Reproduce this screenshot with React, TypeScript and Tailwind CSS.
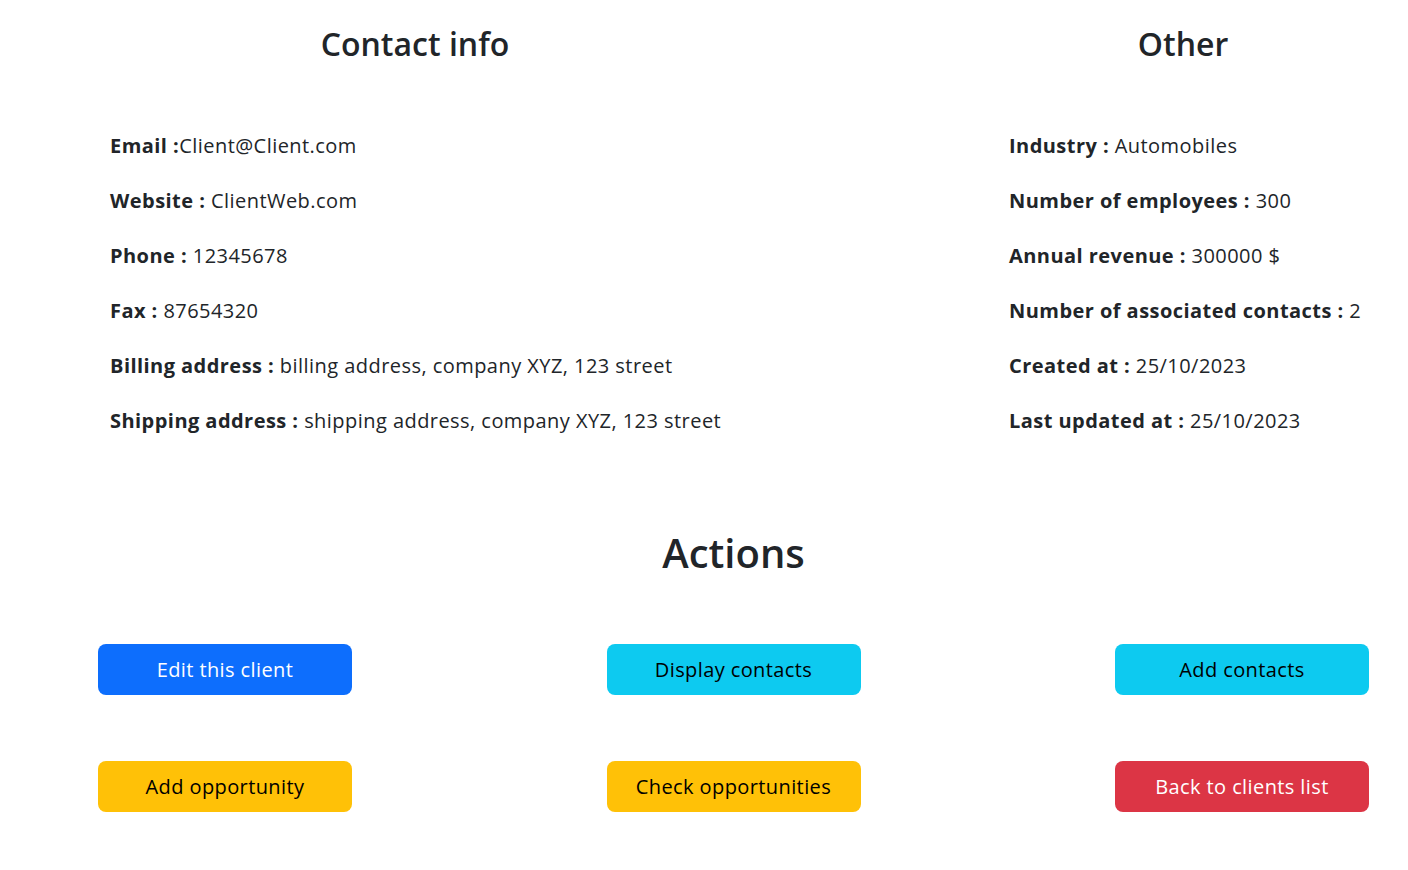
import React from "react";

const contact: [string, string][] = [
  ["Email :", "Client@Client.com"],
  ["Website : ", "ClientWeb.com"],
  ["Phone : ", "12345678"],
  ["Fax : ", "87654320"],
  ["Billing address : ", "billing address, company XYZ, 123 street"],
  ["Shipping address : ", "shipping address, company XYZ, 123 street"],
];

const other: [string, string][] = [
  ["Industry : ", "Automobiles"],
  ["Number of employees : ", "300"],
  ["Annual revenue : ", "300000 $"],
  ["Number of associated contacts : ", "2"],
  ["Created at : ", "25/10/2023"],
  ["Last updated at : ", "25/10/2023"],
];

function InfoList({ items }: { items: [string, string][] }) {
  return (
    <div className="mt-[55px] flex flex-col">
      {items.map(([k, v]) => (
        <div
          key={k}
          className="h-[55px] pt-[1px] flex items-center text-[20px] tracking-[0.45px] whitespace-pre"
        >
          <span className="font-bold">{k}</span>
          <span>{v}</span>
        </div>
      ))}
    </div>
  );
}

function Btn({ label, cls }: { label: string; cls: string }) {
  return (
    <button className={`w-[254px] h-[51px] rounded-[8px] text-[20px] tracking-[0.4px] ${cls}`}>
      {label}
    </button>
  );
}

export default function App() {
  return (
    <div
      className="min-h-[870px] bg-white text-[#212529]"
      style={{ fontFamily: '"Open Sans", "Noto Sans", sans-serif' }}
    >
      <div className="flex pt-[25px]">
        <div className="ml-[110px] w-[610px]">
          <h2 className="text-center text-[32px] leading-[38px] font-semibold">Contact info</h2>
          <InfoList items={contact} />
        </div>
        <div className="ml-[289px] w-[348px]">
          <h2 className="text-center text-[32px] leading-[38px] font-semibold">Other</h2>
          <InfoList items={other} />
        </div>
      </div>
      <div className="mx-[98px] w-[1271px]">
        <h1 className="mt-[81px] text-center text-[40px] leading-[48px] font-semibold">Actions</h1>
        <div className="mt-[67px] flex flex-col gap-[66px]">
          <div className="flex justify-between">
            <Btn label="Edit this client" cls="bg-[#0d6efd] text-white" />
            <Btn label="Display contacts" cls="bg-[#0dcaf0] text-black" />
            <Btn label="Add contacts" cls="bg-[#0dcaf0] text-black" />
          </div>
          <div className="flex justify-between">
            <Btn label="Add opportunity" cls="bg-[#ffc107] text-black" />
            <Btn label="Check opportunities" cls="bg-[#ffc107] text-black" />
            <Btn label="Back to clients list" cls="bg-[#dc3545] text-white" />
          </div>
        </div>
      </div>
    </div>
  );
}
